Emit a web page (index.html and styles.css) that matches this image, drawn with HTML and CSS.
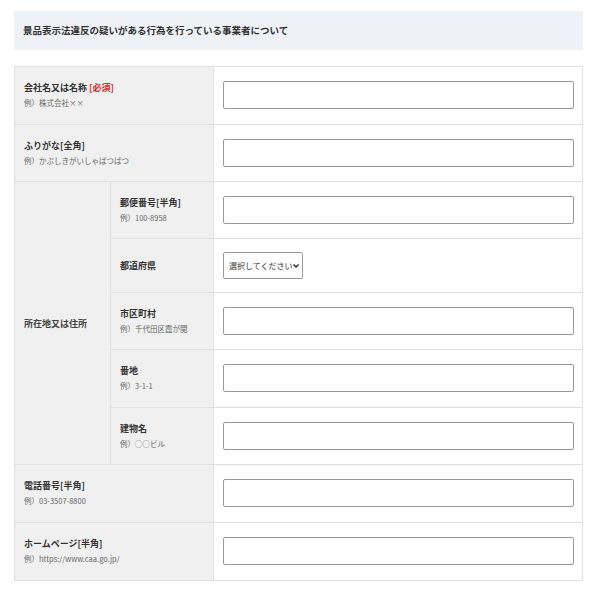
FILE: index.html
```html
<!DOCTYPE html>
<html lang="ja">
<head>
  <meta charset="UTF-8">
  <meta name="viewport" content="width=device-width, initial-scale=1.0">
  <title>事業者について</title>
  <link rel="stylesheet" href="styles.css">
</head>
<body>
  <div class="container">
    <h2 class="section-title">景品表示法違反の疑いがある行為を行っている事業者について</h2>

    <table class="form-table">
      <colgroup>
        <col class="col-a">
        <col class="col-b">
        <col>
      </colgroup>
      <tr>
        <th colspan="2">
          <span class="label">会社名又は名称 <span class="required">[必須]</span></span>
          <span class="example">例）株式会社××</span>
        </th>
        <td><input type="text"></td>
      </tr>
      <tr class="short">
        <th colspan="2">
          <span class="label">ふりがな[全角]</span>
          <span class="example">例）かぶしきがいしゃぱつぱつ</span>
        </th>
        <td><input type="text"></td>
      </tr>
      <tr class="short">
        <th rowspan="5" class="group">所在地又は住所</th>
        <th>
          <span class="label">郵便番号[半角]</span>
          <span class="example">例）100-8958</span>
        </th>
        <td><input type="text"></td>
      </tr>
      <tr class="select-row">
        <th><span class="label">都道府県</span></th>
        <td>
          <select>
            <option>選択してください</option>
            <option>北海道</option>
            <option>東京都</option>
          </select>
        </td>
      </tr>
      <tr class="short">
        <th>
          <span class="label">市区町村</span>
          <span class="example">例）千代田区霞が関</span>
        </th>
        <td><input type="text"></td>
      </tr>
      <tr>
        <th>
          <span class="label">番地</span>
          <span class="example">例）3-1-1</span>
        </th>
        <td><input type="text"></td>
      </tr>
      <tr class="short">
        <th>
          <span class="label">建物名</span>
          <span class="example">例）○○ビル</span>
        </th>
        <td><input type="text"></td>
      </tr>
      <tr>
        <th colspan="2">
          <span class="label">電話番号[半角]</span>
          <span class="example">例）03-3507-8800</span>
        </th>
        <td><input type="text"></td>
      </tr>
      <tr>
        <th colspan="2">
          <span class="label">ホームページ[半角]</span>
          <span class="example">例）https://www.caa.go.jp/</span>
        </th>
        <td><input type="text"></td>
      </tr>
    </table>
  </div>
</body>
</html>
```

FILE: styles.css
```css
body { margin: 0; background: #fff; color: #333; font-family: "Noto Sans CJK JP", "Noto Sans", sans-serif; }
.container { padding: 11px 13px 0 14px; }
.section-title { margin: 0; padding: 0 9px; height: 39px; line-height: 39px; background: #eef2f6; font-size: 9.5px; font-weight: bold; color: #333; }
.form-table { width: 569px; margin-top: 16px; border-collapse: collapse; table-layout: fixed; }
.col-a { width: 96px; }
.col-b { width: 103px; }
.form-table th, .form-table td { border: 1px solid #e0e0e0; padding: 14px 9px 15px; vertical-align: middle; }
.form-table tr.short td { padding-bottom: 14px; }
.form-table th { background: #f0f0f0; text-align: left; font-weight: normal; padding-top: 0; padding-bottom: 0; }
.form-table td { background: #fff; }
.form-table th.group { font-size: 9px; font-weight: bold; color: #444; padding-left: 9px; }
.label { display: block; font-size: 9px; font-weight: bold; line-height: 14px; color: #333; }
.required { color: #d42a2a; }
.example { display: block; font-size: 7.5px; line-height: 14px; color: #666; margin-top: 1px; }
input[type="text"] { display: block; box-sizing: border-box; width: 351px; height: 28px; border: 1px solid #999; border-radius: 2px; background: #fff; }
.select-row td { padding-top: 13px; padding-bottom: 13px; }
select {
  display: block; box-sizing: border-box; width: 80px; height: 27px;
  font-size: 8px; font-family: "Noto Sans CJK JP", sans-serif; color: #333;
  border: 1px solid #999; border-radius: 2px; padding: 0 0 0 5px;
  -webkit-appearance: none; appearance: none;
  background: #fff url("data:image/svg+xml,%3Csvg xmlns='http://www.w3.org/2000/svg' width='6' height='4' viewBox='0 0 6 4'%3E%3Cpath d='M0.5 0.5L3 3L5.5 0.5' fill='none' stroke='%23222' stroke-width='1.4'/%3E%3C/svg%3E") no-repeat right 3px center;
}
```
